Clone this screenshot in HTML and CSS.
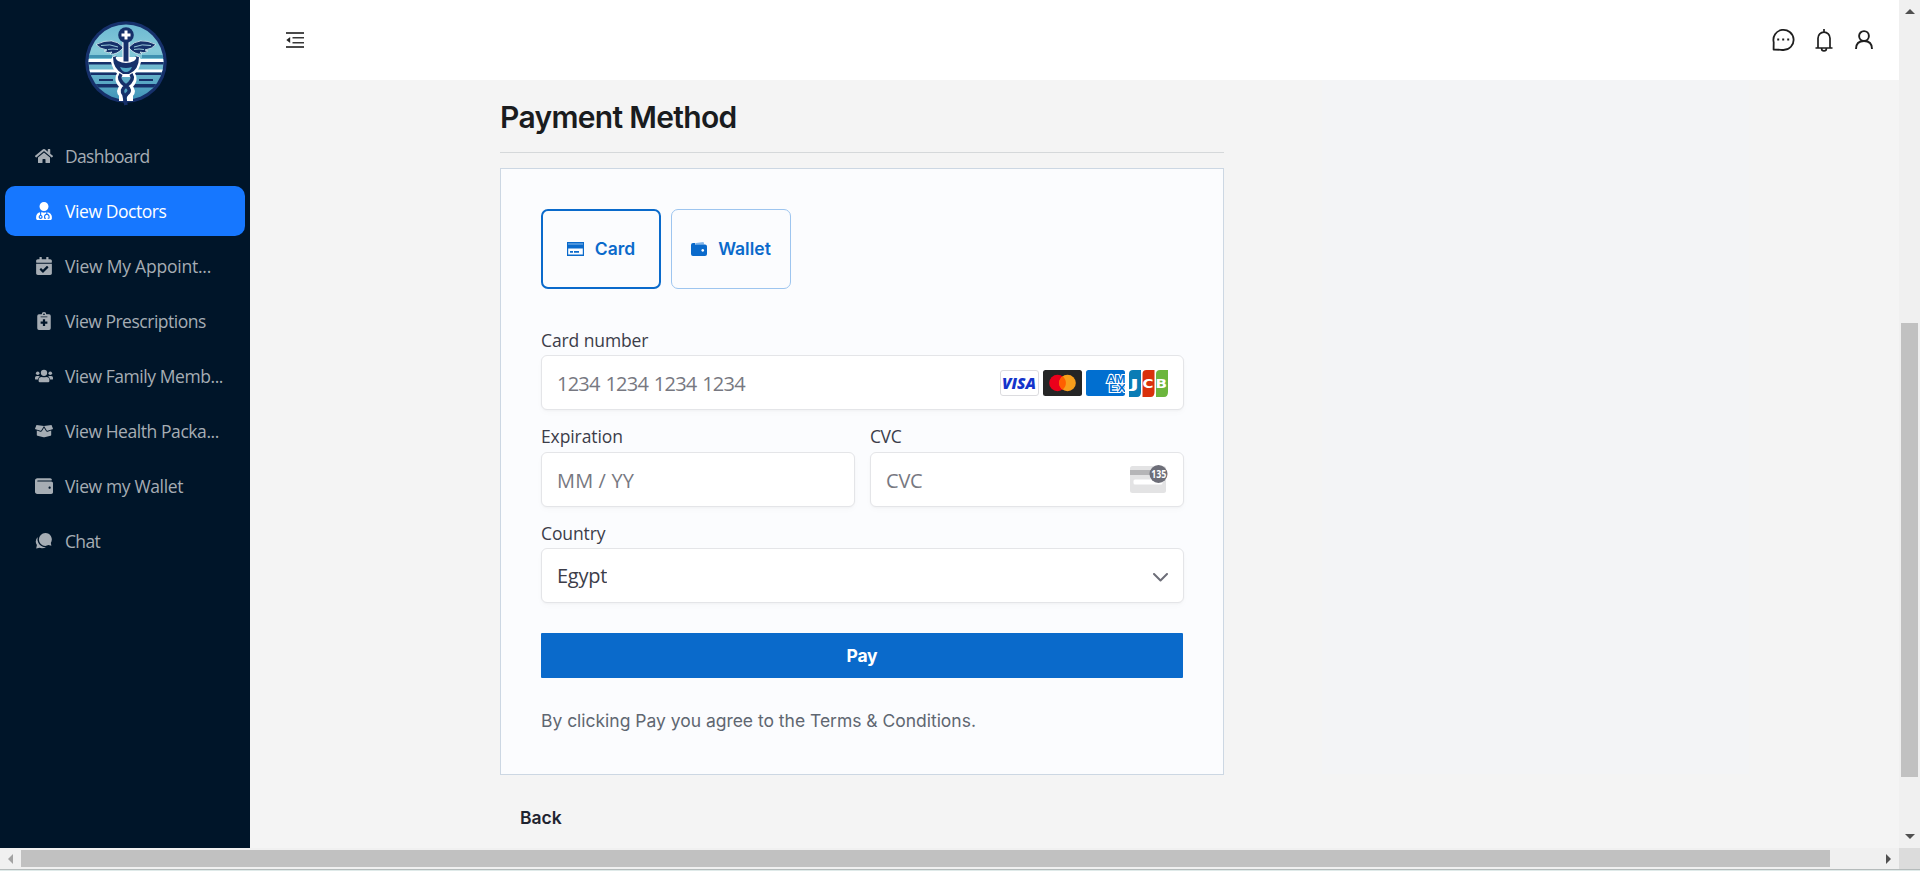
FILE: index.html
```html
<!DOCTYPE html>
<html lang="en">
<head>
<meta charset="utf-8">
<title>Payment Method</title>
<link rel="stylesheet" href="styles.css">
</head>
<body>
<div class="window">
  <div class="viewport">
    <aside class="sidebar">
      <div class="brand">
        <svg width="84" height="88" viewBox="0 0 84 88">
          <defs>
            <linearGradient id="sky" x1="0" y1="0" x2="0" y2="1"><stop offset="0" stop-color="#6db9d2"/><stop offset=".35" stop-color="#86cad9"/><stop offset="1" stop-color="#4195b9"/></linearGradient>
            <clipPath id="disc"><circle cx="42" cy="42" r="37.5"/></clipPath>
          </defs>
          <circle cx="42" cy="42" r="40.8" fill="#16306a"/>
          <circle cx="42" cy="42" r="37.5" fill="url(#sky)"/>
          <g clip-path="url(#disc)">
            <path d="M4 35h24v3H4zM58 35h24v3H58z" fill="#3f91b1"/>
            <path d="M4 39h76v3H4zM4 49.500h76v3H4z" fill="#fff"/>
            <path d="M4 42h76v2.500H4zM4 52.500h76v2.500H4zM4 64h76v3.500H4zM15 59h14v2H15zM55 59h14v2H55z" fill="#16306a"/>
          </g>
          <path d="M32 37q-5 2-2 8 2 7 9 10h6q7-3 9-10 3-6-2-8" fill="#fff" stroke="#fff" stroke-width="4"/>
          <path d="M36 54q-4 7 3 12-5 5-1 9v6M48 54q4 7-3 12 5 5 1 9v6" fill="none" stroke="#fff" stroke-width="6"/>
          <path d="M37 54q-4 6 5 12 6 4 1 8-4 3-1 11M47 54q4 6-5 12-6 4-2 9l2 10" fill="none" stroke="#16306a" stroke-width="3.500"/>
          <path d="M39 27Q29 16 12 24.500q4 4.500 11 5.500l-3 1q4 3 8 1l-2 2q7 1 13-6zM45 27q10-11 27-2.500-4 4.500-11 5.500l3 1q-4 3-8 1l2 2q-7 1-13-6z" fill="#16306a" stroke="#d9f1f5" stroke-width=".8"/>
          <path d="M17 25.500q9-2 17 1.500M24 29.500q5-1 10 0M67 25.500q-9-2-17 1.500M60 29.500q-5-1-10 0" fill="none" stroke="#a5d8e4" stroke-width=".9"/>
          <path d="M39 20h6v22h-6z" fill="#16306a" stroke="#fff" stroke-width="1"/>
          <path d="M33 36q-3 2 1 5 8 4 16 0 4-3 1-5l4 1q0 13-10 17h-6Q29 49 29 37z" fill="#16306a"/>
          <path d="M36 47q6 2 12 0-2 5-6 5t-6-5z" fill="#50a7c4"/>
          <circle cx="42" cy="15" r="7.800" fill="#16306a"/>
          <path d="M40.500 10.500h3v3h3v3h-3v3h-3v-3h-3v-3h3z" fill="#fff"/>
        </svg>
      </div>
      <nav class="menu">
        <a class="item"><svg class="ico" viewBox="0 0 576 512"><path d="M280.37 148.26L96 300.11V464a16 16 0 0 0 16 16l112.06-.29a16 16 0 0 0 15.92-16V368a16 16 0 0 1 16-16h64a16 16 0 0 1 16 16v95.64a16 16 0 0 0 16 16.05L464 480a16 16 0 0 0 16-16V300L295.67 148.26a12.19 12.19 0 0 0-15.3 0zM571.6 251.47L488 182.56V44.05a12 12 0 0 0-12-12h-56a12 12 0 0 0-12 12v72.61L318.47 43a48 48 0 0 0-61 0L4.34 251.47a12 12 0 0 0-1.600 16.900l25.500 31A12 12 0 0 0 45.150 301l235.220-193.740a12.190 12.190 0 0 1 15.300 0L530.900 301a12 12 0 0 0 16.900-1.600l25.500-31a12 12 0 0 0-1.700-16.930z"/></svg><span class="t1">Dashboard</span></a>
        <a class="item active"><svg class="ico" viewBox="0 0 448 512"><path d="M224 256c70.7 0 128-57.3 128-128S294.7 0 224 0 96 57.3 96 128s57.3 128 128 128zM104 424c0 13.3 10.7 24 24 24s24-10.7 24-24-10.7-24-24-24-24 10.7-24 24zm216-135.400v49c36.500 7.400 64 39.800 64 78.400v41.700c0 7.600-5.400 14.200-12.900 15.700l-32.200 6.400c-4.300.9-8.500-1.900-9.400-6.300l-3.100-15.700c-.9-4.300 1.900-8.600 6.300-9.400l19.300-3.900V416c0-62.800-96-65.100-96 1.900v26.700l19.300 3.900c4.300.9 7.100 5.100 6.300 9.400l-3.100 15.700c-.9 4.300-5.100 7.100-9.400 6.300l-31.200-4.200c-7.900-1.100-13.800-7.800-13.800-15.900V416c0-38.600 27.500-70.900 64-78.400v-45.200c-2.200.7-4.400 1.100-6.600 1.900-18 6.300-37.300 9.800-57.400 9.800s-39.400-3.500-57.400-9.800c-7.400-2.600-14.900-4.200-22.600-5.200v81.600c23.100 6.900 40 28.100 40 53.400 0 30.900-25.100 56-56 56s-56-25.100-56-56c0-25.300 16.900-46.500 40-53.400v-80.400C48.500 301 0 355.800 0 422.400v44.800C0 491.900 20.100 512 44.800 512h358.400c24.700 0 44.800-20.100 44.800-44.800v-44.800c0-72-56.800-130.300-128-133.800z"/></svg><span class="t2">View Doctors</span></a>
        <a class="item"><svg class="ico" viewBox="0 0 448 512"><path d="M436 160H12c-6.627 0-12-5.373-12-12v-36c0-26.510 21.490-48 48-48h48V12c0-6.627 5.373-12 12-12h40c6.627 0 12 5.373 12 12v52h128V12c0-6.627 5.373-12 12-12h40c6.627 0 12 5.373 12 12v52h48c26.510 0 48 21.490 48 48v36c0 6.627-5.373 12-12 12zM12 192h424c6.627 0 12 5.373 12 12v260c0 26.510-21.490 48-48 48H48c-26.510 0-48-21.490-48-48V204c0-6.627 5.373-12 12-12zm333.296 95.947l-28.169-28.398c-4.667-4.705-12.265-4.736-16.970-.068L194.120 364.665l-45.980-46.352c-4.667-4.705-12.266-4.736-16.971-.068l-28.397 28.170c-4.705 4.667-4.736 12.265-.068 16.970l82.601 83.269c4.667 4.705 12.265 4.736 16.970.068l142.953-141.805c4.705-4.667 4.736-12.265.068-16.970z"/></svg><span class="t3">View My Appoint...</span></a>
        <a class="item"><svg class="ico" viewBox="0 0 384 512"><path fill-rule="evenodd" d="M336 64h-80a64 64 0 0 0-128 0H48Q0 64 0 112v352q0 48 48 48h288q48 0 48-48V112q0-48-48-48zM192 40a24 24 0 1 1 0 48 24 24 0 0 1 0-48zM96 128h192v24H96zM160 208h64v64h64v64h-64v64h-64v-64H96v-64h64z"/></svg><span class="t4">View Prescriptions</span></a>
        <a class="item"><svg class="ico" viewBox="0 0 640 512"><circle cx="96" cy="160" r="64"/><circle cx="544" cy="160" r="64"/><circle cx="320" cy="144" r="112"/><path d="M0 320q0-64 64-64h64q25 0 45 18-60 35-70 110H32q-32 0-32-32zM640 320q0-64-64-64h-64q-25 0-45 18 60 35 70 110h71q32 0 32-32zM128 403q0-115 115-115 77 32 154 0 115 0 115 115v29q0 48-48 48H176q-48 0-48-48z"/></svg><span class="t5">View Family Memb...</span></a>
        <a class="item"><svg class="ico" viewBox="0 0 640 512"><path d="M53 42l267 35-98 162q-8 14-24 10L17 197q-21-7-14-27zM587 42L320 77l98 162q8 14 24 10l181-52q21-7 14-27zM320 139l71 118q20 30 55 22l130-38v153q0 23-24 31l-213 53q-19 5-38 0L88 425q-24-8-24-31V241l130 38q35 8 55-22z"/></svg><span class="t6">View Health Packa...</span></a>
        <a class="item"><svg class="ico" viewBox="0 0 512 512"><path d="M461.200 128H80c-8.840 0-16-7.160-16-16s7.160-16 16-16h384c8.840 0 16-7.160 16-16 0-26.510-21.490-48-48-48H64C28.650 32 0 60.650 0 96v320c0 35.350 28.650 64 64 64h397.200c28.020 0 50.800-21.530 50.800-48V176c0-26.470-22.780-48-50.800-48zM416 336c-17.670 0-32-14.330-32-32s14.330-32 32-32 32 14.330 32 32-14.330 32-32 32z"/></svg><span class="t7">View my Wallet</span></a>
        <a class="item"><svg class="ico" viewBox="0 0 18 18"><path d="M10.300 1.100a6.400 6.400 0 1 0 0 12.800c1.200 0 2.200-.3 3.100-.8l3 .7-.6-2.900A6.400 6.400 0 0 0 10.300 1.100z"/><path d="M2.900 5.100A6.200 6.200 0 0 0 1.900 13L1.200 16.500l3.300-.7a7 7 0 0 0 6.500-.9A7.500 7.500 0 0 1 2.900 5.100z"/></svg><span class="t8">Chat</span></a>
      </nav>
    </aside>

    <div class="page">
      <header class="topbar">
        <svg width="18" height="18" viewBox="0 0 18 18"><path d="M0 2h18M0 16h18" stroke="#4a4a4a" stroke-width="2"/><path d="M6.500 6.700H18M6.500 11.700H18" stroke="#383838" stroke-width="1.500"/><path d="M4.200 6v6L.3 9z" fill="#262626"/></svg>
        <div class="actions">
          <svg width="24" height="24" viewBox="0 0 24 24" fill="none" stroke="#1f1f1f" stroke-width="1.800"><path d="M2.600 21.500l.1-7.200A10.100 10.100 0 1 1 12.500 22a14 14 0 0 1-2.500-.2z" stroke-linejoin="round"/><path d="M6.200 11.500h2M11.200 11.500h2M16.200 11.500h2" stroke-width="2"/></svg>
          <svg class="bell" width="18" height="23" viewBox="0 0 18 23" fill="none" stroke="#1f1f1f" stroke-width="1.700"><path d="M9 0v3M.5 19h17M3 19V9.200a6 6 0 0 1 12 0V19M6.600 19.500a2.400 2.400 0 0 0 4.800 0"/></svg>
          <svg width="18" height="20" viewBox="0 0 18 20" fill="none" stroke="#1f1f1f" stroke-width="1.900"><circle cx="9" cy="6" r="4.900"/><path d="M1 19q0-8 8-8t8 8"/></svg>
        </div>
      </header>
      <div class="content">
        <main class="checkout">
          <h1>Payment Method</h1>
          <section class="panel">
            <div class="tabs">
              <button class="tab selected"><svg width="17" height="14" viewBox="0 0 17 14"><path fill="#0a6acb" fill-rule="evenodd" d="M0 0h17v14H0zM1.200 6.500v6h14.600v-6zM3 9h3v1.700H3zM7 9h5v1.700H7z"/><path d="M1 1.500h15v1H1z" fill="#8cbcea"/></svg><span>Card</span></button>
              <button class="tab"><svg width="16" height="14" viewBox="0 0 16 14"><path d="M5 1l7.500-1 .8 2.500H5z" fill="#82b5e9"/><path fill="#0a6acb" fill-rule="evenodd" d="M2 1h2.500L4 2.500h10q2 0 2 2V12q0 2-2 2H2q-2 0-2-2V3q0-2 2-2zM11.700 6.900a1.400 1.400 0 1 0 .1 0z"/></svg><span>Wallet</span></button>
            </div>
            <div class="field">
              <label class="l1">Card number</label>
              <div class="input"><span class="ph p1">1234 1234 1234 1234</span>
                <svg width="168" height="28" viewBox="0 0 168 28">
                  <rect x=".5" y="1.500" width="38" height="25" rx="2.500" fill="#fff" stroke="#dcdcdf"/>
                  <text x="2" y="19.500" class="visa" textLength="34" lengthAdjust="spacingAndGlyphs">VISA</text>
                  <rect x="43" y="1" width="39" height="26" rx="2.500" fill="#252525"/>
                  <circle cx="57.500" cy="14" r="8.300" fill="#eb001b"/><circle cx="67.500" cy="14" r="8.300" fill="#f79e1b"/><path d="M62.500 7.300a8.300 8.300 0 0 1 0 13.400 8.300 8.300 0 0 1 0-13.400z" fill="#ff5f00"/>
                  <svg x="86" y="1" width="39" height="26"><rect width="39" height="26" rx="2.500" fill="#016fd0"/>
                  <text class="amex" x="20.500" y="12.500" textLength="19" lengthAdjust="spacingAndGlyphs">AM</text><text class="amex" x="23" y="21.500" textLength="17" lengthAdjust="spacingAndGlyphs">EX</text></svg>
                  <path d="M133 1h8v22q0 5-4 5h-8V5q0-4 4-4z" fill="#0b7cb5"/><path d="M146.500 1h8v22q0 5-4 5h-8V5q0-4 4-4z" fill="#d9310c"/><path d="M160 1h8v22q0 5-4 5h-8V5q0-4 4-4z" fill="#6cb63d"/>
                  <text class="jcb" x="130" y="19" textLength="9" lengthAdjust="spacingAndGlyphs">J</text><text class="jcb" x="142.500" y="19" textLength="11" lengthAdjust="spacingAndGlyphs">C</text><text class="jcb" x="155.500" y="19" textLength="11.500" lengthAdjust="spacingAndGlyphs">B</text>
                </svg>
              </div>
            </div>
            <div class="pair">
              <div class="field"><label class="l2">Expiration</label><div class="input"><span class="ph p2">MM / YY</span></div></div>
              <div class="field"><label class="l3">CVC</label><div class="input"><span class="ph p3">CVC</span>
                <svg class="cvcard" width="38" height="28" viewBox="0 0 38 28"><rect y="1" width="36" height="27" rx="2.500" fill="#e3e3e4"/><path d="M0 5h24v5H0z" fill="#b5b5b7"/><rect x="3.500" y="14.500" width="29" height="5" rx="1.500" fill="#fff"/><circle cx="28.500" cy="9" r="9" fill="#6d6e78"/><text class="code" x="21.200" y="12.500" textLength="15" lengthAdjust="spacingAndGlyphs">135</text></svg>
              </div></div>
            </div>
            <div class="field country">
              <label class="l4">Country</label>
              <div class="input"><span class="value p4">Egypt</span><svg class="chevron" width="15" height="9" viewBox="0 0 15 9"><path d="M1 1l6.500 6.500L14 1" fill="none" stroke="#6d6e78" stroke-width="2" stroke-linecap="round" stroke-linejoin="round"/></svg></div>
            </div>
            <button class="pay">Pay</button>
            <p class="terms">By clicking Pay you agree to the Terms &amp; Conditions.</p>
          </section>
          <button class="back">Back</button>
        </main>
        <div class="summary"></div>
      </div>
    </div>

    <div class="vbar"><i class="arrow up"></i><i class="vthumb"></i><i class="arrow down"></i></div>
  </div>
  <div class="hbar"><i class="arrow left"></i><i class="hthumb"></i><i class="arrow right"></i><i class="corner"></i></div>
  <div class="edge"></div>
</div>
</body>
</html>
```
FILE: styles.css
```css
* { box-sizing: border-box; }
body { margin: 0; overflow: hidden; font-family: Inter, sans-serif; background: #f4f4f4; }
svg { display: block; flex: none; }
button { font: inherit; margin: 0; }
.window { width: 1920px; height: 871px; display: flex; flex-direction: column; }
.viewport { height: 848px; display: flex; }

.sidebar { width: 250px; background: #001529; font-family: "Open Sans", sans-serif; }
.brand { height: 131px; padding: 20px 0 0 84px; }
.menu { display: flex; flex-direction: column; gap: 5px; padding: 0 5px; }
.item { height: 50px; border-radius: 10px; display: flex; align-items: center; gap: 12px; padding-left: 30px; font-size: 17.5px; color: #a6adb4; white-space: nowrap; letter-spacing: -.43px; }
.item.active { background: #1677ff; color: #fff; }
.ico { width: 18px; height: 18px; fill: currentColor; }
.t1 { letter-spacing: -.65px; }
.t3 { letter-spacing: -.22px; }
.t4 { letter-spacing: -.48px; }
.t7 { letter-spacing: -.36px; }
.t8 { letter-spacing: -.65px; }

.page { width: 1649px; }
.topbar { height: 80px; background: #fff; display: flex; justify-content: space-between; align-items: center; padding: 0 26px 0 36px; }
.actions { display: flex; align-items: center; gap: 21px; }
.bell { margin: 0 1px 0 -1px; }
.content { height: 768px; display: flex; padding-left: 250px; background: #f4f4f4; }
.checkout { width: 724px; }
.summary { width: 427px; height: 694px; margin-left: 98px; background: #f3f4f6; }
h1 { margin: 0; height: 73px; padding-top: 17px; border-bottom: 1px solid #d5d8da; font-size: 30px; line-height: 40px; font-weight: 600; color: #1a1c1e; letter-spacing: -.68px; }
.panel { margin-top: 15px; height: 607px; border: 1px solid #ccd7e3; background: #fbfcfe; padding: 40px; }
.tabs { display: flex; gap: 10px; }
.tab { width: 120px; height: 80px; display: flex; align-items: center; justify-content: center; gap: 11px; padding: 0 0 1px; border: 1px solid #9dc5ef; border-radius: 7px; background: #fbfcfe; color: #0a6acb; font-size: 17.5px; font-weight: 600; }
.tab.selected { border: 2px solid #0a6acb; }
.field { font-family: "Open Sans", sans-serif; }
.panel > .field, .pair { margin-right: -1px; }
.tabs + .field { margin-top: 38px; }
label { display: block; height: 28px; line-height: 26px; font-size: 17.5px; color: #3c3d49; letter-spacing: -.1px; }
.l2, .l3 { line-height: 24px; }
.l3 { letter-spacing: -.4px; }
.input { height: 55px; display: flex; align-items: center; justify-content: space-between; padding: 0 15px; border: 1px solid #e4e5e8; border-radius: 6px; background: #fff; font-size: 20px; box-shadow: 0 1px 2px rgba(0,0,0,.03), 0 3px 6px rgba(0,0,0,.02); }
.ph { color: #777881; padding-top: 1px; }
.p1 { letter-spacing: -.75px; word-spacing: 1.2px; }
.p2 { letter-spacing: .15px; }
.p3 { letter-spacing: -.2px; }
.value { color: #3c3d49; height: 24px; line-height: 24px; margin-top: 1px; overflow: hidden; letter-spacing: -.25px; }
.cvcard { margin-top: -2px; }
.chevron { margin-top: 3px; }
.pair { display: grid; grid-template-columns: 1fr 1fr; gap: 15px; margin-top: 14px; }
.panel > .country { margin-top: 13px; }
.pay { display: block; width: 642px; height: 45px; margin-top: 30px; border: 0; border-radius: 1px; background: #0a6acb; color: #fff; font-size: 17.5px; font-weight: 700; letter-spacing: -.2px; }
.terms { margin: 32px 0 0; font-size: 17.5px; line-height: 22px; color: #5f6771; letter-spacing: -.02px; }
.back { display: block; margin: 32px 0 0 20px; padding: 0; border: 0; background: none; font-size: 17.5px; line-height: 22px; font-weight: 600; color: #1f2430; }

.visa { font: italic 800 15px "Open Sans", sans-serif; fill: #1434cb; }
.amex { font: 700 11px "Liberation Sans", sans-serif; fill: #016fd0; stroke: #fff; stroke-width: 2px; paint-order: stroke; }
.jcb { font: 700 13px "DejaVu Sans", sans-serif; fill: #fff; }
.code { font: 700 10px "Open Sans", sans-serif; fill: #fff; }

.vbar { width: 21px; background: #f0f0f0; display: flex; flex-direction: column; align-items: center; padding: 9px 0; }
.vthumb { width: 17px; height: 454px; margin-top: 309px; background: #c1c1c1; }
.arrow { width: 0; height: 0; border: 5px solid transparent; flex: none; }
.up { border-bottom-color: #505050; border-top: 0; }
.down { border-top-color: #505050; border-bottom: 0; margin-top: auto; }
.hbar { height: 21px; background: #f0f0f0; display: flex; align-items: center; }
.left { border-right-color: #a3a3a3; border-left: 0; margin-left: 8px; }
.hthumb { width: 1809px; height: 17px; margin-left: 8px; background: #c1c1c1; }
.right { border-left-color: #505050; border-right: 0; margin-left: auto; margin-right: 8px; }
.corner { width: 21px; height: 21px; background: #dcdcdc; }
.edge { height: 2px; background: #dfeae9; border-top: 1px solid #b5bbbb; }
```
